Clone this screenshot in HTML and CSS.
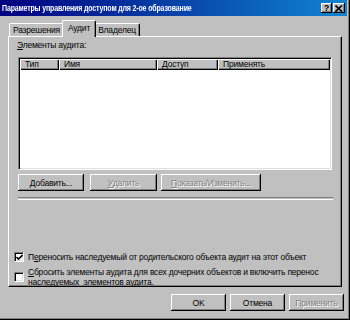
FILE: index.html
```html
<!DOCTYPE html>
<html lang="ru">
<head>
<meta charset="utf-8">
<title>Параметры управления доступом</title>
<link rel="stylesheet" href="styles.css">
</head>
<body>
<div class="window">
  <div class="titlebar">
    <span class="title">Параметры управления доступом для 2-ое образование</span>
    <div class="tbtns">
      <span class="tbtn help">?</span>
      <span class="tbtn close"><svg width="8" height="7" viewBox="0 0 8 7"><path d="M0.5 0.5 L7 6.5 M7 0.5 L0.5 6.5" stroke="#000" stroke-width="1.6" fill="none"/></svg></span>
    </div>
  </div>
  <div class="tabs">
    <div class="tab">Разрешения</div>
    <div class="tab active">Аудит</div>
    <div class="tab">Владелец</div>
  </div>
  <div class="panel">
    <div class="inner">
      <div class="label"><u>Э</u>лементы аудита:</div>
      <div class="list">
        <div class="lhead">
          <div class="col c1">Тип</div>
          <div class="col c2">Имя</div>
          <div class="col c3">Доступ</div>
          <div class="col c4">Применять</div>
        </div>
      </div>
      <div class="brow">
        <div class="btn b1"><u>Д</u>обавить...</div>
        <div class="btn b2 disabled"><u>У</u>далить</div>
        <div class="btn b3 disabled"><u>П</u>оказать/Изменить...</div>
      </div>
      <div class="sep"></div>
    </div>
    <div class="checks">
      <div class="chk">
        <span class="box"><svg width="7" height="7" viewBox="0 0 7 7"><path d="M0.5 3 L2.5 5 L6.5 1" stroke="#000" stroke-width="1.6" fill="none"/></svg></span>
        <span class="ctext">П<u>е</u>реносить наследуемый от родительского объекта аудит на этот объект</span>
      </div>
      <div class="chk two">
        <span class="box"></span>
        <span class="ctext"><u>С</u>бросить элементы аудита для всех дочерних объектов и включить перенос<br>наследуемых&nbsp; элементов аудита.</span>
      </div>
    </div>
  </div>
  <div class="footer">
    <div class="btn fb">OK</div>
    <div class="btn fb">Отмена</div>
    <div class="btn fb disabled">Применить</div>
  </div>
</div>
</body>
</html>
```
FILE: styles.css
```css
html, body {
  margin: 0;
  padding: 0;
  background: #c0c0c0;
}
body {
  font-family: "Liberation Sans", Arial, sans-serif;
  font-size: 8.5px;
  letter-spacing: -0.2px;
  color: #000;
}
.window {
  width: 350px;
  height: 320px;
  box-sizing: border-box;
  background: #c0c0c0;
  padding: 0 3px 3px 0;
  box-shadow: inset -1px -1px #000, inset -2px -2px #808080;
  overflow: hidden;
}
.titlebar {
  height: 16px;
  background: linear-gradient(to right, #000080, #1084d0);
  display: flex;
  align-items: center;
  justify-content: space-between;
  padding: 0 2px 0 2px;
}
.title {
  color: #fff;
  font-weight: bold;
  font-size: 9px;
  letter-spacing: -0.2px;
  white-space: nowrap;
  display: inline-block;
  transform: scaleX(0.78);
  transform-origin: left center;
}
.tbtns {
  display: flex;
  gap: 1px;
}
.tbtn {
  width: 11px;
  height: 10px;
  box-sizing: border-box;
  background: #c0c0c0;
  box-shadow: inset -1px -1px #000, inset 1px 1px #fff, inset -2px -2px #808080;
  display: flex;
  align-items: center;
  justify-content: center;
  font-weight: bold;
  font-size: 9px;
  letter-spacing: 0;
  line-height: 10px;
}
.close { width: 12px; }
.tabs {
  display: flex;
  align-items: flex-end;
  height: 20px;
  padding-left: 9px;
  position: relative;
  z-index: 1;
}
.tab {
  height: 13px;
  box-sizing: border-box;
  padding: 1px 3px 0 3px;
  border-top: 1px solid #fff;
  border-left: 1px solid #fff;
  border-right: 1px solid #000;
  box-shadow: inset -1px 0 #808080;
  border-radius: 2px 2px 0 0;
  line-height: 11px;
  white-space: nowrap;
}
.tab.active {
  height: 17px;
  margin: 0 -2px -1px -2px;
  padding: 2px 5px 0 5px;
  background: #c0c0c0;
  position: relative;
  z-index: 2;
}
.panel {
  margin-left: 8px;
  width: 334px;
  height: 251px;
  box-sizing: border-box;
  border-top: 1px solid #fff;
  border-left: 1px solid #fff;
  border-right: 1px solid #000;
  border-bottom: 1px solid #000;
  box-shadow: inset -1px -1px #808080;
  padding: 3px 0 0 5px;
}
.inner {
  padding-left: 4px;
}
.label {
  line-height: 11px;
  height: 11px;
  margin-left: -1px;
}
.list {
  margin-top: 6px;
  width: 314px;
  height: 113px;
  box-sizing: border-box;
  background: #fff;
  border-top: 1px solid #808080;
  border-left: 1px solid #808080;
  border-right: 1px solid #fff;
  border-bottom: 1px solid #fff;
  box-shadow: inset 1px 1px #000, inset -1px -1px #dfdfdf;
  padding: 1px;
}
.lhead {
  display: flex;
  height: 11px;
}
.col {
  box-sizing: border-box;
  height: 11px;
  line-height: 10px;
  padding-left: 5px;
  background: #c0c0c0;
  box-shadow: inset 1px 1px #fff, inset -1px -1px #000, inset -2px -2px #808080;
  white-space: nowrap;
}
.c1 { width: 39px; }
.c2 { width: 98px; }
.c3 { width: 61px; }
.c4 { flex: 1; }
.brow {
  display: flex;
  margin-top: 4px;
}
.btn {
  height: 17px;
  box-sizing: border-box;
  background: #c0c0c0;
  box-shadow: inset -1px -1px #000, inset 1px 1px #fff, inset -2px -2px #808080;
  display: flex;
  align-items: center;
  justify-content: center;
  white-space: nowrap;
}
.b1 { width: 66px; }
.b2 { width: 67px; margin-left: 6px; }
.b3 { width: 100px; margin-left: 4px; }
.disabled {
  color: #808080;
  text-shadow: 1px 1px #fff;
}
.sep {
  margin-top: 6px;
  width: 315px;
  height: 1px;
  border-top: 1px solid #808080;
  border-bottom: 1px solid #fff;
}
.checks {
  margin-top: 52px;
  display: flex;
  flex-direction: column;
  gap: 5px;
}
.chk {
  display: flex;
  align-items: center;
  gap: 4px;
  line-height: 10px;
}
.ctext {
  white-space: nowrap;
}
.box {
  width: 10px;
  height: 10px;
  box-sizing: border-box;
  background: #fff;
  border-top: 1px solid #808080;
  border-left: 1px solid #808080;
  border-right: 1px solid #fff;
  border-bottom: 1px solid #fff;
  box-shadow: inset 1px 1px #000, inset -1px -1px #dfdfdf;
  display: flex;
  align-items: center;
  justify-content: center;
  flex: none;
}
.footer {
  display: flex;
  justify-content: flex-end;
  gap: 4px;
  margin-top: 7px;
  padding-right: 3px;
}
.fb { width: 55px; }
```
